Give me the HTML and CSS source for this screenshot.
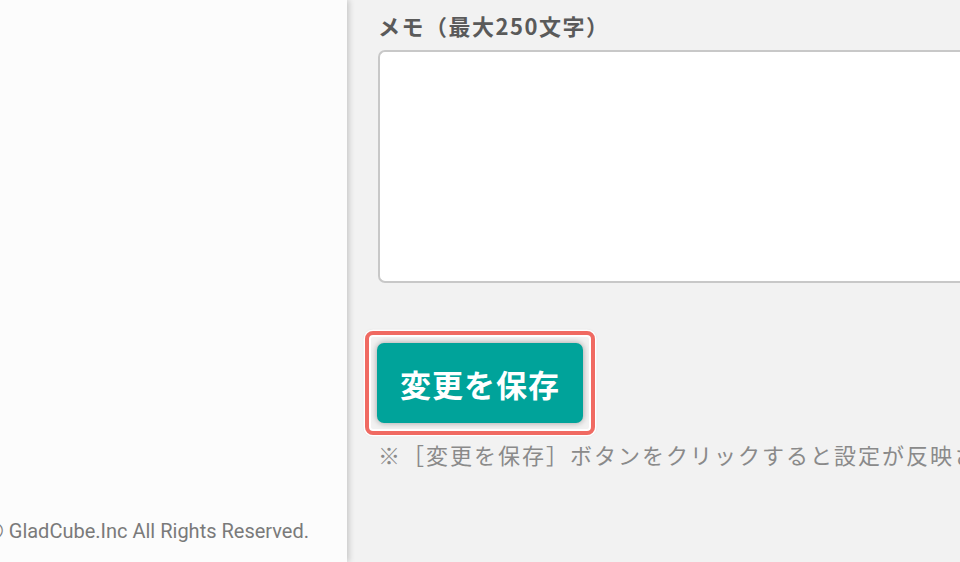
FILE: index.html
```html
<!DOCTYPE html>
<html lang="ja">
<head>
<meta charset="utf-8">
<title>メモ設定</title>
<link rel="stylesheet" href="styles.css">
</head>
<body>
<div class="layout">
  <aside class="sidebar">
    <p class="copyright"><span class="copyright-text">© GladCube.Inc All Rights Reserved.</span></p>
  </aside>
  <main class="main">
    <label class="field-label" for="memo">メモ（最大250文字）</label>
    <textarea id="memo" class="memo"></textarea>
    <div class="highlight">
      <button class="save-btn" type="button">変更を保存</button>
    </div>
    <p class="note">※［変更を保存］ボタンをクリックすると設定が反映されます。</p>
  </main>
</div>
</body>
</html>
```
FILE: styles.css
```css
html, body {
  margin: 0;
  padding: 0;
  height: 100%;
  overflow: hidden;
}
body {
  font-family: "Noto Sans CJK JP", "Noto Sans", sans-serif;
  background: #f2f2f2;
}
.layout {
  display: flex;
  height: 562px;
}
.sidebar {
  position: relative;
  z-index: 1;
  flex: 0 0 347px;
  background: #fcfcfc;
  box-shadow: 2px 0 6px rgba(0, 0, 0, 0.18);
  display: flex;
  flex-direction: column;
  justify-content: flex-end;
  overflow: hidden;
}
.copyright {
  display: flex;
  justify-content: flex-end;
  margin: 0 0 19px 0;
  padding-right: 38px;
  font-family: Roboto, "Liberation Sans", sans-serif;
  font-size: 20px;
  line-height: 24px;
  color: #7a7a7a;
}
.copyright-text {
  flex: none;
  white-space: nowrap;
}
.main {
  flex: 1;
  min-width: 0;
  padding: 9px 0 0 31px;
  overflow: hidden;
  display: flex;
  flex-direction: column;
  align-items: flex-start;
}
.field-label {
  display: block;
  font-size: 22px;
  line-height: 32px;
  font-weight: 700;
  color: #5a5a5a;
  letter-spacing: 1.5px;
  margin-bottom: 9px;
}
.memo {
  box-sizing: border-box;
  width: 700px;
  height: 233px;
  flex: none;
  border: 2px solid #c8c8c8;
  border-right: none;
  border-radius: 7px 0 0 7px;
  background: #ffffff;
  resize: none;
  margin: 0;
  padding: 8px;
  font: inherit;
}
.highlight {
  margin: 48px 0 0 -13px;
  padding: 8px;
  border: 4px solid #f06a62;
  border-radius: 8px;
  box-shadow: 0 0 0 1.5px #ffffff, inset 0 0 0 2px #ffffff, 0 0 3px rgba(0, 0, 0, 0.25);
  display: inline-flex;
}
.save-btn {
  width: 206px;
  height: 80px;
  border: none;
  border-radius: 7px;
  background: #00a39a;
  color: #ffffff;
  font-family: "Noto Sans CJK JP", sans-serif;
  font-weight: 700;
  font-size: 31px;
  letter-spacing: 1px;
  box-shadow: 0 0 6px rgba(0, 0, 0, 0.35);
  padding: 0;
  cursor: pointer;
}
.note {
  margin: 3px 0 0 0;
  font-size: 22px;
  line-height: 33px;
  color: #8a8a8a;
  letter-spacing: 2px;
  white-space: nowrap;
}
```
